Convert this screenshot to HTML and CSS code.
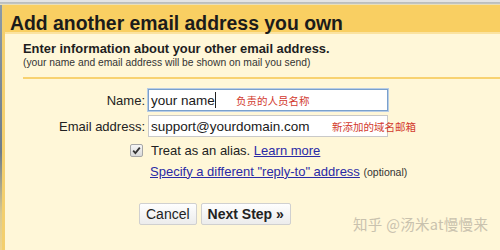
FILE: index.html
```html
<!DOCTYPE html>
<html>
<head>
<meta charset="utf-8">
<link rel="stylesheet" href="styles.css">
</head>
<body>
<div class="topbar"></div>
<div class="frame">
  <div class="edge"></div>
  <div class="dialog">
    <div class="header">Add another email address you own</div>
    <div class="content">
      <div class="intro">
        <div class="lead">Enter information about your other email address.</div>
        <div class="note">(your name and email address will be shown on mail you send)</div>
      </div>
      <div class="form">
        <div class="row">
          <label class="label">Name:</label>
          <div class="field focused"><span class="val">your name</span><span class="caret"></span><span class="hint hint-name">负责的人员名称</span></div>
        </div>
        <div class="row">
          <label class="label">Email address:</label>
          <div class="field"><span class="val">support@yourdomain.com</span><span class="hint hint-mail">新添加的域名邮箱</span></div>
        </div>
        <div class="row opt">
          <span class="check"><svg width="11" height="11" viewBox="0 0 11 11"><path d="M2.2 5.6 L4.4 8 L8.8 2.6" fill="none" stroke="#333" stroke-width="1.8"/></svg></span>
          <span class="opt-text">Treat as an alias. <a class="link">Learn more</a></span>
        </div>
        <div class="row opt reply">
          <span class="opt-text"><a class="link">Specify a different "reply-to" address</a> <span class="small">(optional)</span></span>
        </div>
        <div class="buttons">
          <button class="btn">Cancel</button>
          <button class="btn primary">Next Step »</button>
        </div>
      </div>
      <div class="watermark">知乎 @汤米at慢慢来</div>
    </div>
  </div>
</div>
</body>
</html>
```
FILE: styles.css
```css
html, body {
  margin: 0;
  padding: 0;
  width: 500px;
  height: 250px;
  overflow: hidden;
  background: #fff7d8;
  font-family: "Liberation Sans", Arial, sans-serif;
}
.topbar {
  height: 5px;
  background: linear-gradient(#e4e4e4 0, #e4e4e4 2px, #b9bcbc 2px, #c4c6c4 4px, #e9dfb8 4px);
}
.frame {
  display: flex;
  height: 245px;
}
.edge {
  width: 2px;
  background: linear-gradient(#8a9aa8 0, #6c7c8c 60%, #d8c890 85%, #efd58e 100%);
}
.dialog {
  flex: 1;
  border-left: 3px solid #f3cf6e;
  display: flex;
  flex-direction: column;
}
.header {
  background: #f9cf62;
  height: 29px;
  box-sizing: border-box;
  padding: 7px 0 0 5px;
  font-size: 19.4px;
  line-height: 22px;
  font-weight: bold;
  color: #1b1b1b;
  border-bottom: 2px solid #fbe3a0;
  white-space: nowrap;
}
.content {
  flex: 1;
  background: #fff7d8;
  position: relative;
}
.intro {
  margin: 7px 0 0 18px;
  padding-bottom: 8px;
  border-bottom: 2px solid #f8d270;
}
.lead {
  font-size: 12.9px;
  font-weight: bold;
  color: #1e1e1e;
  line-height: 16px;
}
.note {
  font-size: 10.3px;
  color: #333;
  line-height: 12px;
}
.form {
  padding-top: 8px;
  display: flex;
  flex-direction: column;
}
.row {
  display: flex;
  align-items: center;
  height: 26px;
}
.label {
  width: 140px;
  text-align: right;
  font-size: 13px;
  color: #222;
  padding-right: 3px;
}
.field {
  width: 240px;
  height: 22px;
  box-sizing: border-box;
  border: 1px solid #c9c9c9;
  background: #fff;
  display: flex;
  align-items: center;
  padding-left: 2px;
  font-size: 13.5px;
  color: #1a1a1a;
  position: relative;
}
.field.focused {
  border: 1px solid #7aa0cc;
  box-shadow: 0 0 0 1px #b8cde6;
}
.caret {
  display: inline-block;
  width: 1px;
  height: 16px;
  background: #222;
  margin-left: 0;
}
.hint {
  position: absolute;
  font-family: "Noto Sans CJK SC", sans-serif;
  font-size: 10.5px;
  color: #d23a2e;
  top: 3px;
  white-space: nowrap;
}
.hint-name { left: 87px; }
.hint-mail { left: 183px; }
.opt {
  padding-left: 125px;
  height: 22px;
}
.check {
  width: 11px;
  height: 11px;
  border: 1px solid #a7a7a7;
  border-radius: 2px;
  background: linear-gradient(#f6f6f6, #d9d9d9);
  display: inline-flex;
  margin-right: 8px;
}
.opt-text {
  font-size: 13px;
  color: #222;
}
.reply {
  padding-left: 145px;
  height: 20px;
}
.link {
  color: #2a2aa6;
  text-decoration: underline;
}
.small {
  font-size: 10.5px;
  color: #333;
}
.buttons {
  display: flex;
  gap: 4px;
  padding-left: 134px;
  margin-top: 22px;
}
.btn {
  font-family: "Liberation Sans", Arial, sans-serif;
  font-size: 14px;
  height: 22px;
  padding: 0 6px;
  border: 1px solid #d0d0d0;
  border-radius: 2px;
  background: linear-gradient(#fefefe, #ececec);
  color: #222;
}
.btn.primary {
  font-weight: bold;
  padding: 0 6px;
}
.watermark {
  position: absolute;
  left: 348px;
  top: 179px;
  font-family: "Noto Sans CJK SC", sans-serif;
  font-size: 14.5px;
  color: #c9c2ae;
  letter-spacing: 0.3px;
}
```
